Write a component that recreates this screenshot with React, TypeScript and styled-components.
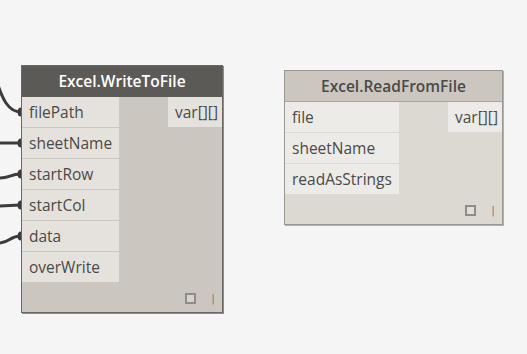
import React from 'react';
import styled, { createGlobalStyle, css } from 'styled-components';

const GlobalStyle = createGlobalStyle`
  html, body {
    margin: 0;
    padding: 0;
    background: #f5f5f5;
  }
  body {
    font-family: 'Open Sans', 'Noto Sans', sans-serif;
  }
`;

type Variant = 'selected' | 'idle';

const palette = {
  selected: {
    header: '#5c5a57',
    headerText: '#ffffff',
    headerLine: '#5c5a57',
    body: '#cbc7c0',
    row: '#e5e2dd',
    border: '#6a6764',
    shadow: '#8e8b87',
  },
  idle: {
    header: '#cbc7c0',
    headerText: '#4a4a48',
    headerLine: '#a8a49e',
    body: '#dcd9d3',
    row: '#edebe7',
    border: '#9a9691',
    shadow: '#b3afaa',
  },
};

const Canvas = styled.div`
  position: relative;
  width: 527px;
  height: 354px;
  overflow: hidden;
  background: #f5f5f5;
`;

const WireLayer = styled.svg`
  position: absolute;
  left: 0;
  top: 0;
  width: 527px;
  height: 354px;
`;

const Node = styled.div<{ $x: number; $y: number; $w: number; $variant: Variant }>`
  position: absolute;
  left: ${(p) => p.$x}px;
  top: ${(p) => p.$y}px;
  width: ${(p) => p.$w}px;
  box-sizing: border-box;
  display: flex;
  flex-direction: column;
  ${(p) => css`
    background: ${palette[p.$variant].body};
    border: 1px solid ${palette[p.$variant].border};
    box-shadow: 1px 1px 0 ${palette[p.$variant].shadow};
  `}
`;

const Header = styled.div<{ $variant: Variant }>`
  height: 30px;
  line-height: 30px;
  text-align: center;
  font-size: 15.5px;
  font-weight: 600;
  ${(p) => css`
    background: ${palette[p.$variant].header};
    color: ${palette[p.$variant].headerText};
    border-bottom: 1px solid ${palette[p.$variant].headerLine};
  `}
`;

const Body = styled.div`
  display: flex;
  justify-content: space-between;
  align-items: flex-start;
`;

const Inputs = styled.div<{ $w: number }>`
  display: flex;
  flex-direction: column;
  gap: 1px;
  width: ${(p) => p.$w}px;
`;

const Port = styled.div<{ $variant: Variant; $align?: 'left' | 'right' }>`
  height: 30px;
  line-height: 30px;
  font-size: 15.5px;
  color: #4a4a48;
  white-space: nowrap;
  background: ${(p) => palette[p.$variant].row};
  padding: ${(p) => (p.$align === 'right' ? '0 4px 0 7px' : '0 0 0 7px')};
  text-align: ${(p) => p.$align ?? 'left'};
`;

const Footer = styled.div`
  height: 30px;
  display: flex;
  justify-content: flex-end;
  align-items: flex-start;
  padding: 11px 7px 0 0;
  box-sizing: border-box;
  gap: 15px;
`;

const PreviewBox = styled.div<{ $variant: Variant }>`
  width: 11px;
  height: 11px;
  box-sizing: border-box;
  border: 2px solid #8f8c89;
  background: ${(p) => (p.$variant === 'selected' ? '#d6d3cd' : '#e2dfda')};
`;

const Lacing = styled.span`
  font-family: 'DejaVu Sans', sans-serif;
  font-size: 11px;
  line-height: 11px;
  color: #7f7c79;
`;

type NodeSpec = {
  title: string;
  x: number;
  y: number;
  w: number;
  inputW: number;
  variant: Variant;
  inputs: string[];
  output: string;
};

const nodes: NodeSpec[] = [
  {
    title: 'Excel.WriteToFile',
    x: 21,
    y: 65,
    w: 202,
    inputW: 97,
    variant: 'selected',
    inputs: ['filePath', 'sheetName', 'startRow', 'startCol', 'data', 'overWrite'],
    output: 'var[][]',
  },
  {
    title: 'Excel.ReadFromFile',
    x: 284,
    y: 70,
    w: 219,
    inputW: 114,
    variant: 'idle',
    inputs: ['file', 'sheetName', 'readAsStrings'],
    output: 'var[][]',
  },
];

// wires coming in from off-screen nodes to the left
const wires = [
  { d: 'M -3 82 C 2 98, 8 112, 21 112', end: 112 },
  { d: 'M 0 143 L 21 143', end: 143 },
  { d: 'M 0 178 C 10 178, 10 174, 21 174', end: 174 },
  { d: 'M 0 206 C 10 206, 10 205, 21 205', end: 205 },
  { d: 'M 0 243 C 10 242, 10 236, 21 236', end: 236 },
];

const DynNode = ({ spec }: { spec: NodeSpec }) => (
  <Node $x={spec.x} $y={spec.y} $w={spec.w} $variant={spec.variant}>
    <Header $variant={spec.variant}>{spec.title}</Header>
    <Body>
      <Inputs $w={spec.inputW}>
        {spec.inputs.map((name) => (
          <Port key={name} $variant={spec.variant}>
            {name}
          </Port>
        ))}
      </Inputs>
      <Port $variant={spec.variant} $align="right">
        {spec.output}
      </Port>
    </Body>
    <Footer>
      <PreviewBox $variant={spec.variant} />
      <Lacing>|</Lacing>
    </Footer>
  </Node>
);

const App = () => {
  return (
    <>
      <GlobalStyle />
      <Canvas>
        <WireLayer viewBox="0 0 527 354">
          {wires.map((w, i) => (
            <g key={i}>
              <path d={w.d} fill="none" stroke="#3b3b3b" strokeWidth={3} />
              <ellipse cx={21} cy={w.end} rx={3.5} ry={4.5} fill="#3b3b3b" />
            </g>
          ))}
        </WireLayer>
        {nodes.map((n) => (
          <DynNode key={n.title} spec={n} />
        ))}
      </Canvas>
    </>
  );
};

export default App;
